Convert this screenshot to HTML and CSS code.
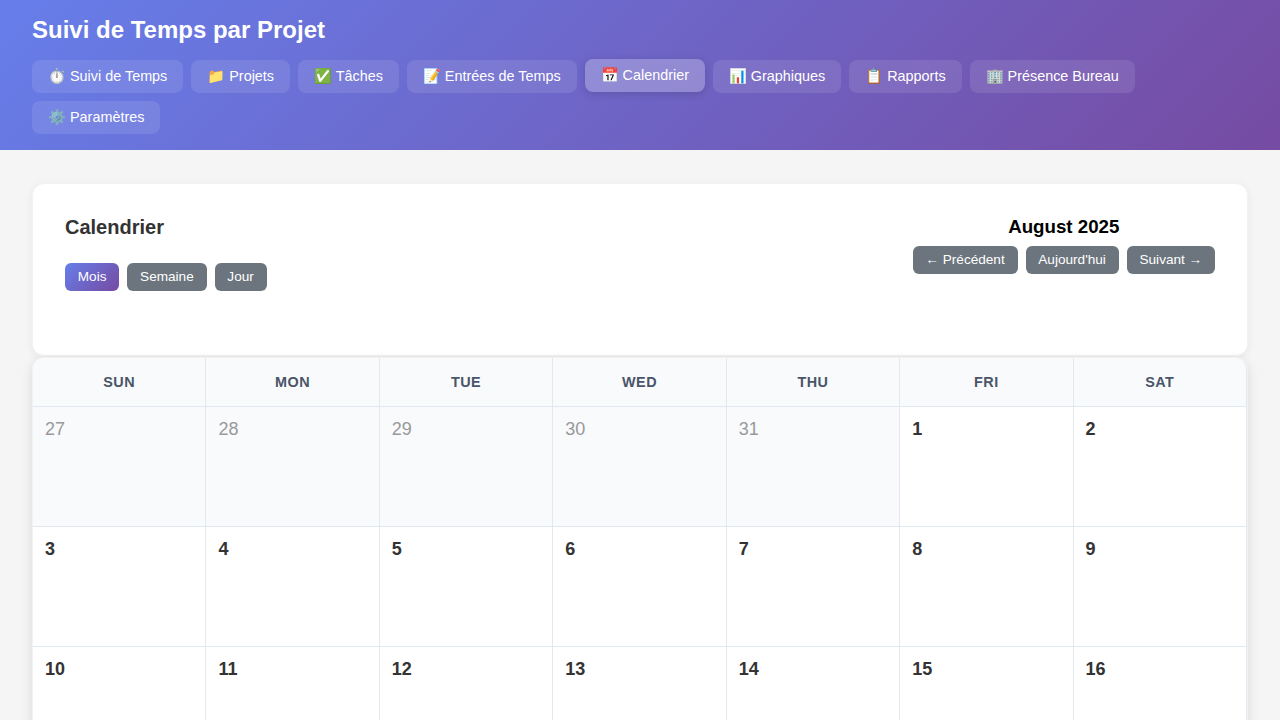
FILE: index.html
```html
<!DOCTYPE html>
<html lang="fr">
<head>
    <meta charset="UTF-8">
    <title>Suivi de Temps par Projet</title>
    <link rel="stylesheet" href="styles.css">
</head>
<body>
    <header class="app-header">
        <h1>Suivi de Temps par Projet</h1>
        <nav class="nav-tabs">
            <button class="nav-tab">⏱️ Suivi de Temps</button>
            <button class="nav-tab">📁 Projets</button>
            <button class="nav-tab">✅ Tâches</button>
            <button class="nav-tab">📝 Entrées de Temps</button>
            <button class="nav-tab active">📅 Calendrier</button>
            <button class="nav-tab">📊 Graphiques</button>
            <button class="nav-tab">📋 Rapports</button>
            <button class="nav-tab">🏢 Présence Bureau</button>
            <button class="nav-tab">⚙️ Paramètres</button>
        </nav>
    </header>

    <main class="content">
        <section class="card">
            <div class="card-head">
                <div>
                    <h2>Calendrier</h2>
                    <div class="btn-row">
                        <button class="btn btn-primary">Mois</button>
                        <button class="btn">Semaine</button>
                        <button class="btn">Jour</button>
                    </div>
                </div>
                <div class="month-nav">
                    <h3>August 2025</h3>
                    <div class="btn-row">
                        <button class="btn">← Précédent</button>
                        <button class="btn">Aujourd'hui</button>
                        <button class="btn">Suivant →</button>
                    </div>
                </div>
            </div>
        </section>

        <section class="calendar">
            <div class="dow">Sun</div>
            <div class="dow">Mon</div>
            <div class="dow">Tue</div>
            <div class="dow">Wed</div>
            <div class="dow">Thu</div>
            <div class="dow">Fri</div>
            <div class="dow">Sat</div>

            <div class="day other">27</div>
            <div class="day other">28</div>
            <div class="day other">29</div>
            <div class="day other">30</div>
            <div class="day other">31</div>
            <div class="day">1</div>
            <div class="day">2</div>

            <div class="day">3</div>
            <div class="day">4</div>
            <div class="day">5</div>
            <div class="day">6</div>
            <div class="day">7</div>
            <div class="day">8</div>
            <div class="day">9</div>

            <div class="day">10</div>
            <div class="day">11</div>
            <div class="day">12</div>
            <div class="day">13</div>
            <div class="day">14</div>
            <div class="day">15</div>
            <div class="day">16</div>
        </section>
    </main>
</body>
</html>
```

FILE: styles.css
```css
* { box-sizing: border-box; margin: 0; padding: 0; }
html, body { height: 720px; overflow: hidden; }
body { font-family: "Liberation Sans", Arial, sans-serif; background: #f5f5f5; color: #333; }

.app-header {
    height: 150px;
    padding: 16px 32px;
    color: #fff;
    background: linear-gradient(135deg, #667eea 0%, #764ba2 100%);
}
.app-header h1 { font-size: 24px; line-height: 28px; margin-bottom: 16px; }
.nav-tabs { display: flex; flex-wrap: wrap; gap: 8px 7.95px; }
.nav-tab {
    font: 14.4px "Liberation Sans", Arial, sans-serif;
    color: #fff;
    height: 33px;
    padding: 0 16px;
    border: none;
    border-radius: 8px;
    background: rgba(255, 255, 255, 0.1);
}
.nav-tab.active {
    background: rgba(255, 255, 255, 0.25);
    transform: translateY(-1px);
    box-shadow: 0 2px 8px rgba(0, 0, 0, 0.15);
}

.content { padding: 33px 32px 0; }
.card {
    height: 173px;
    padding: 32px;
    background: #fff;
    border: 1px solid #f2f2f2;
    border-radius: 12px;
    box-shadow: 0 2px 10px rgba(0, 0, 0, 0.06);
}
.card-head { display: flex; justify-content: space-between; align-items: flex-start; }
.card h2 { font-size: 20px; line-height: 23px; color: #333; margin-bottom: 24px; }
.month-nav { text-align: center; }
.month-nav h3 { font-size: 18.72px; line-height: 22px; color: #000; margin-bottom: 8px; }
.btn-row { display: flex; gap: 8px; }
.btn {
    font: 13.6px "Liberation Sans", Arial, sans-serif;
    color: #fff;
    height: 28px;
    padding: 0 12.8px 2px;
    border: none;
    border-radius: 6px;
    background: #6c757d;
}
.btn-primary { background: linear-gradient(135deg, #667eea 0%, #764ba2 100%); }

.calendar {
    display: grid;
    grid-template-columns: repeat(7, 1fr);
    margin-top: 1px;
    background: #fff;
    border: 1px solid #f2f2f2;
    border-radius: 12px 12px 0 0;
    box-shadow: 0 4px 12px rgba(0, 0, 0, 0.12);
}
.dow {
    height: 49px;
    line-height: 48px;
    text-align: center;
    font-size: 14.4px;
    font-weight: bold;
    letter-spacing: 0.5px;
    text-transform: uppercase;
    color: #4a5568;
    background: #f8fafc;
    border-right: 1px solid #e2e8f0;
    border-bottom: 1px solid #e2e8f0;
}
.dow:first-child { border-top-left-radius: 12px; }
.dow:nth-child(7) { border-top-right-radius: 12px; }
.day {
    height: 120px;
    padding: 12px;
    font-size: 18px;
    line-height: 20px;
    font-weight: bold;
    color: #333;
    border-right: 1px solid #e2e8f0;
    border-bottom: 1px solid #e2e8f0;
}
.day.other { font-weight: normal; color: #999; background: #f8fafc; }
```
